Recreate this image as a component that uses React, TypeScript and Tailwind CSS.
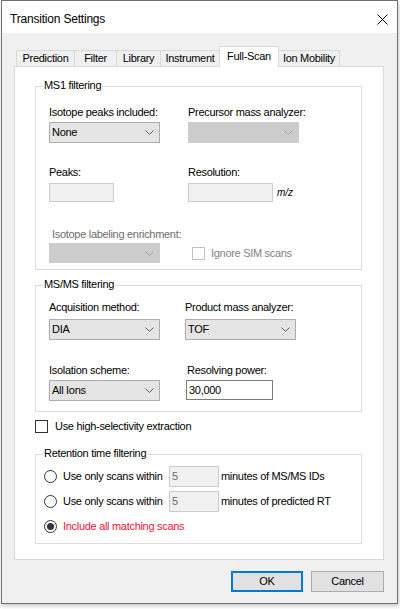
import React from 'react';

function Chevron({ disabled }: { disabled?: boolean }) {
  return (
    <svg width="9" height="5" viewBox="0 0 9 5" className="shrink-0">
      <path d="M0.5 0.5 L4.5 4.5 L8.5 0.5" fill="none" stroke={disabled ? '#a6a6a6' : '#5f5f5f'} strokeWidth="1" />
    </svg>
  );
}

function Combo({ value, w, h = 'h-[21px]', disabled }: { value?: string; w: string; h?: string; disabled?: boolean }) {
  return (
    <div
      className={`${w} ${h} flex items-center justify-between pl-[2px] pr-[5px] border ${
        disabled ? 'bg-[#cccccc] border-[#cccccc]' : 'bg-[#e5e5e5] border-[#adadad]'
      }`}
    >
      <span>{value}</span>
      <Chevron disabled={disabled} />
    </div>
  );
}

function TextBox({ value, w, h, enabled }: { value?: string; w: string; h: string; enabled?: boolean }) {
  return (
    <div
      className={`${w} ${h} flex items-center pl-[2px] border ${
        enabled ? 'bg-white border-[#7a7a7a] text-black' : 'bg-[#f0f0f0] border-[#cccccc] text-[#6d6d6d]'
      }`}
    >
      {value}
    </div>
  );
}

function Group({ title, h, children }: { title: string; h: string; children: React.ReactNode }) {
  return (
    <div className={`relative ml-[20px] w-[327px] ${h} border border-[#dcdcdc]`}>
      <span className="absolute left-[7px] top-[-8px] px-[1px] bg-white">{title}</span>
      {children}
    </div>
  );
}

function Radio({ checked }: { checked?: boolean }) {
  return (
    <div className="w-[13px] h-[13px] rounded-full border border-[#333333] bg-white flex items-center justify-center shrink-0">
      {checked && <div className="w-[7px] h-[7px] rounded-full bg-[#333333]" />}
    </div>
  );
}

const tabs = [
  { label: 'Prediction', cls: 'w-[59px] border-l border-r' },
  { label: 'Filter', cls: 'w-[42px] border-r' },
  { label: 'Library', cls: 'w-[44px] border-r' },
  { label: 'Instrument', cls: 'w-[58px]' },
];

export default function App() {
  return (
    <div className="w-[400px] h-[609px] bg-white font-['Liberation_Sans',Arial,sans-serif] text-[11px] leading-[13px] tracking-[-0.3px] text-black">
      <div className="ml-[1px] w-[397px] h-[604px] border border-[#6f6f6f] bg-[#f0f0f0] shadow-[1px_2px_4px_rgba(0,0,0,0.22)] flex flex-col">
        {/* title bar */}
        <div className="h-[32px] bg-white flex items-center justify-between pl-[8px] pr-[9px] pt-[4px]">
          <span className="text-[12px] tracking-[-0.2px]">Transition Settings</span>
          <svg width="11" height="11" viewBox="0 0 11 11">
            <path d="M0.5 0.5 L10.5 10.5 M10.5 0.5 L0.5 10.5" stroke="#000" strokeWidth="1" />
          </svg>
        </div>

        <div className="pl-[12px] pt-[13px]">
          {/* tabs */}
          <div className="flex items-end h-[20px] pl-[2px]">
            {tabs.map((t) => (
              <div key={t.label} className={`${t.cls} h-[16px] border-t border-[#d9d9d9] bg-[#f0f0f0] flex items-center justify-center`}>
                {t.label}
              </div>
            ))}
            <div className="relative z-10 w-[60px] h-[21px] -mb-[1px] border-l border-r border-t border-[#d9d9d9] bg-white flex justify-center pt-[3px]">
              Full-Scan
            </div>
            <div className="w-[61px] h-[16px] border-t border-r border-[#d9d9d9] bg-[#f0f0f0] flex items-center justify-center">
              Ion Mobility
            </div>
          </div>

          {/* tab panel */}
          <div className="w-[370px] h-[494px] border border-[#d9d9d9] bg-white pt-[19px]">
            <Group title="MS1 filtering" h="h-[184px]">
              <div className="pl-[13px] pt-[19px] flex flex-col">
                <div className="flex">
                  <div className="w-[139px] flex flex-col gap-[3px]">
                    <span>Isotope peaks included:</span>
                    <Combo value="None" w="w-[111px]" />
                  </div>
                  <div className="flex flex-col gap-[3px]">
                    <span>Precursor mass analyzer:</span>
                    <Combo w="w-[111px]" disabled />
                  </div>
                </div>
                <div className="flex mt-[23px]">
                  <div className="w-[139px] flex flex-col gap-[4px]">
                    <span>Peaks:</span>
                    <TextBox w="w-[65px]" h="h-[19px]" />
                  </div>
                  <div className="flex flex-col gap-[4px]">
                    <span>Resolution:</span>
                    <div className="flex items-center gap-[4px]">
                      <TextBox w="w-[85px]" h="h-[19px]" />
                      <span className="italic text-[10px] tracking-[0px]">m/z</span>
                    </div>
                  </div>
                </div>
                <div className="flex flex-col mt-[26px] gap-[2px]">
                  <span className="pl-[3px] text-[#6d6d6d]">Isotope labeling enrichment:</span>
                  <div className="flex items-center">
                    <div className="w-[139px]">
                      <Combo w="w-[111px]" h="h-[20px]" disabled />
                    </div>
                    <div className="flex items-center gap-[6px] pl-[4px]">
                      <div className="w-[13px] h-[13px] border border-[#c2c2c2] bg-white" />
                      <span className="text-[#838383]">Ignore SIM scans</span>
                    </div>
                  </div>
                </div>
              </div>
            </Group>

            <div className="mt-[15px]">
              <Group title="MS/MS filtering" h="h-[127px]">
                <div className="pl-[13px] pt-[15px] flex flex-col">
                  <div className="flex">
                    <div className="w-[136px] flex flex-col gap-[5px]">
                      <span>Acquisition method:</span>
                      <Combo value="DIA" w="w-[111px]" />
                    </div>
                    <div className="flex flex-col gap-[5px]">
                      <span>Product mass analyzer:</span>
                      <Combo value="TOF" w="w-[111px]" />
                    </div>
                  </div>
                  <div className="flex mt-[24px]">
                    <div className="w-[136px] flex flex-col gap-[3px]">
                      <span>Isolation scheme:</span>
                      <Combo value="All Ions" w="w-[111px]" />
                    </div>
                    <div className="flex flex-col gap-[3px] pl-[1px]">
                      <span className="pl-[1px]">Resolving power:</span>
                      <TextBox value="30,000" w="w-[87px]" h="h-[20px]" enabled />
                    </div>
                  </div>
                </div>
              </Group>
            </div>

            <div className="ml-[20px] mt-[8px] flex items-center gap-[7px]">
              <div className="w-[13px] h-[13px] border border-[#333333] bg-white" />
              <span>Use high-selectivity extraction</span>
            </div>

            <div className="mt-[21px]">
              <Group title="Retention time filtering" h="h-[90px]">
                <div className="pl-[8px] pt-[11px] flex flex-col gap-[4px]">
                  <div className="h-[21px] flex items-center">
                    <Radio />
                    <span className="ml-[6px] w-[106px]">Use only scans within</span>
                    <TextBox value="5" w="w-[50px]" h="h-[21px]" />
                    <span className="ml-[2px]">minutes of MS/MS IDs</span>
                  </div>
                  <div className="h-[21px] flex items-center">
                    <Radio />
                    <span className="ml-[6px] w-[106px]">Use only scans within</span>
                    <TextBox value="5" w="w-[50px]" h="h-[21px]" />
                    <span className="ml-[2px]">minutes of predicted RT</span>
                  </div>
                  <div className="h-[21px] flex items-center">
                    <Radio checked />
                    <span className="ml-[6px] text-[#f0143c]">Include all matching scans</span>
                  </div>
                </div>
              </Group>
            </div>
          </div>

          {/* buttons */}
          <div className="w-[370px] mt-[11px] flex justify-end gap-[8px]">
            <button className="w-[72px] h-[21px] border-2 border-[#0078d7] bg-[#e1e1e1] flex items-center justify-center">OK</button>
            <button className="w-[73px] h-[21px] border border-[#adadad] bg-[#e1e1e1] flex items-center justify-center">Cancel</button>
          </div>
        </div>
      </div>
    </div>
  );
}
